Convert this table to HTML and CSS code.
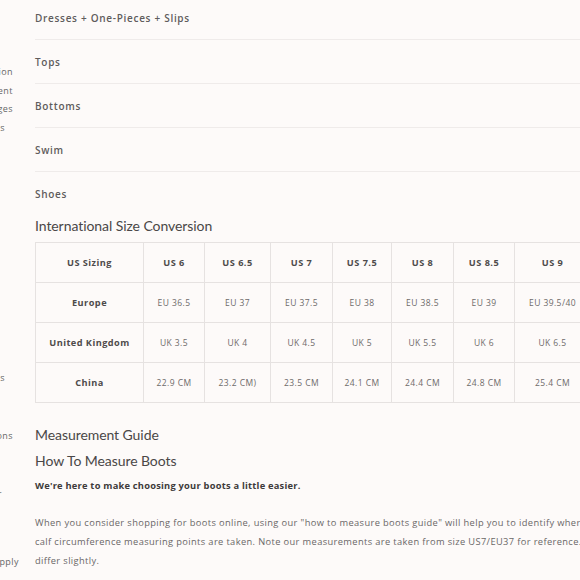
FILE: index.html
```html
<!DOCTYPE html>
<html>
<head>
<meta charset="utf-8">
<link rel="stylesheet" href="styles.css">
</head>
<body>
<div class="page">
  <nav class="sidebar">
    <div class="side-group side-top">
      <a class="side-link">Shipping Information</a>
      <a class="side-link">Product Measurement</a>
      <a class="side-link">Returns &amp; Exchanges</a>
      <a class="side-link short">Returns</a>
    </div>
    <a class="side-link short gap-a">Gift Cards</a>
    <a class="side-link gap-b">Terms &amp; Conditions</a>
    <a class="side-link tiny gap-c">Order Tracker</a>
    <a class="side-link wide gap-d">Terms Apply</a>
  </nav>
  <main class="main">
    <div class="accordion">
      <div class="acc-item">Dresses + One-Pieces + Slips</div>
      <div class="acc-item">Tops</div>
      <div class="acc-item">Bottoms</div>
      <div class="acc-item">Swim</div>
      <div class="acc-item last">Shoes</div>
    </div>
    <h2 class="heading">International Size Conversion</h2>
    <table class="size-table">
      <colgroup>
        <col class="c-label"><col class="c1"><col class="c2"><col class="c3"><col class="c4"><col class="c5"><col class="c6"><col class="c7">
      </colgroup>
      <tr class="head-row">
        <th>US Sizing</th><th>US 6</th><th>US 6.5</th><th>US 7</th><th>US 7.5</th><th>US 8</th><th>US 8.5</th><th>US 9</th>
      </tr>
      <tr>
        <th>Europe</th><td>EU 36.5</td><td>EU 37</td><td>EU 37.5</td><td>EU 38</td><td>EU 38.5</td><td>EU 39</td><td>EU 39.5/40</td>
      </tr>
      <tr>
        <th>United Kingdom</th><td>UK 3.5</td><td>UK 4</td><td>UK 4.5</td><td>UK 5</td><td>UK 5.5</td><td>UK 6</td><td>UK 6.5</td>
      </tr>
      <tr>
        <th>China</th><td>22.9 CM</td><td>23.2 CM)</td><td>23.5 CM</td><td>24.1 CM</td><td>24.4 CM</td><td>24.8 CM</td><td>25.4 CM</td>
      </tr>
    </table>
    <h2 class="heading guide">Measurement Guide</h2>
    <h2 class="heading sub">How To Measure Boots</h2>
    <p class="lead">We're here to make choosing your boots a little easier.</p>
    <p class="body-text">When you consider shopping for boots online, using our "how to measure boots guide" will help you to identify where the<br>calf circumference measuring points are taken. Note our measurements are taken from size US7/EU37 for reference. Sizes may<br>differ slightly.</p>
  </main>
</div>
</body>
</html>
```
FILE: styles.css
```css
html, body {
  margin: 0;
  padding: 0;
  background: #fdfaf9;
  overflow: hidden;
  width: 580px;
  height: 580px;
}
.page {
  display: flex;
  align-items: flex-start;
  font-family: "Open Sans", "Liberation Sans", sans-serif;
  color: #6a6767;
}
.sidebar {
  flex: none;
  width: 140px;
  margin-left: -127px;
  display: flex;
  flex-direction: column;
  text-align: right;
  font-size: 9px;
  letter-spacing: 0.05em;
  white-space: nowrap;
  color: #666;
}
.side-top {
  display: flex;
  flex-direction: column;
  margin-top: 63px;
}
.side-link {
  display: block;
  line-height: 18.7px;
}
.side-link.short { padding-right: 8px; }
.side-link.tiny { padding-right: 11px; }
.side-link.wide { margin-right: -6px; }
.gap-a { margin-top: 231px; }
.gap-b { margin-top: 39px; }
.gap-c { margin-top: 40px; }
.gap-d { margin-top: 49px; }

.main {
  flex: none;
  width: 700px;
  margin-left: 22px;
  margin-top: -4px;
}
.accordion {
  display: flex;
  flex-direction: column;
}
.acc-item {
  height: 44px;
  box-sizing: border-box;
  display: flex;
  align-items: center;
  border-bottom: 1px solid #efebea;
  font-size: 10px;
  font-weight: 600;
  letter-spacing: 0.07em;
  color: #5f5c5c;
}
.acc-item.last { border-bottom: none; }

.heading {
  margin: 0;
  font-family: "Lato", "Liberation Sans", sans-serif;
  font-weight: 400;
  font-size: 14px;
  line-height: 20px;
  color: #4a4747;
  letter-spacing: -0.005em;
}
.size-table {
  margin-top: 6px;
  border-collapse: collapse;
  table-layout: fixed;
  width: 555px;
}
.c-label { width: 108px; }
.c1 { width: 61px; }
.c2 { width: 66px; }
.c3 { width: 62px; }
.c4 { width: 59px; }
.c5 { width: 62px; }
.c6 { width: 61px; }
.c7 { width: 76px; }
.size-table th,
.size-table td {
  height: 39px;
  padding: 0;
  border: 1px solid #e6e2e1;
  text-align: center;
  font-size: 8.5px;
  letter-spacing: 0.05em;
  white-space: nowrap;
}
.size-table th {
  font-weight: 700;
  font-size: 9.2px;
  color: #4e4b4b;
}
.size-table td {
  font-weight: 400;
  color: #6e6a6a;
}
.heading.guide { margin-top: 22px; }
.heading.sub { margin-top: 6px; font-size: 14px; }
.lead {
  margin: 7px 0 0;
  font-size: 9.3px;
  line-height: 16px;
  font-weight: 700;
  letter-spacing: 0.025em;
  color: #3e3b3b;
}
.body-text {
  margin: 19px 0 0;
  font-size: 9.3px;
  line-height: 19px;
  letter-spacing: 0.04em;
  color: #6a6767;
  white-space: nowrap;
}
```
